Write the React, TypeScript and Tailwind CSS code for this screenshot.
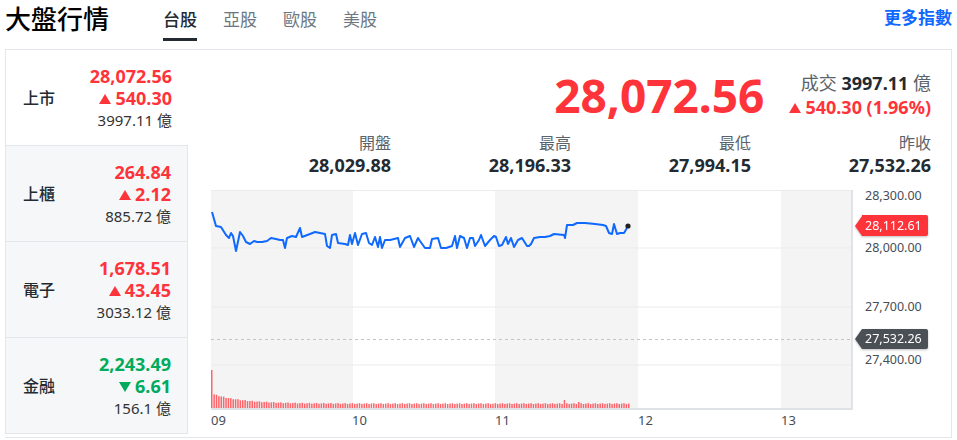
import React from "react";

const RED = "#ff333a";
const GREEN = "#00ab5e";

type Card = {
  name: string;
  value: string;
  change: string;
  up: boolean;
  volume: string;
};

const cards: Card[] = [
  { name: "上市", value: "28,072.56", change: "540.30", up: true, volume: "3997.11" },
  { name: "上櫃", value: "264.84", change: "2.12", up: true, volume: "885.72" },
  { name: "電子", value: "1,678.51", change: "43.45", up: true, volume: "3033.12" },
  { name: "金融", value: "2,243.49", change: "6.61", up: false, volume: "156.1" },
];

const stats = [
  { label: "開盤", value: "28,029.88" },
  { label: "最高", value: "28,196.33" },
  { label: "最低", value: "27,994.15" },
  { label: "昨收", value: "27,532.26" },
];

// price line, traced in page coordinates
const linePts: [number, number][] = [
  [212, 212], [216, 226], [221, 227], [226, 235], [229, 238], [231, 233], [233, 236], [236, 251],
  [240, 232], [243, 236], [246, 242], [250, 244], [254, 241], [257, 242], [262, 242], [267, 241],
  [271, 238], [276, 239], [280, 240], [283, 240], [285, 248], [287, 238], [292, 236], [296, 237],
  [300, 228], [302, 237], [310, 234], [315, 232], [320, 233], [325, 234], [327, 246], [330, 248],
  [332, 235], [336, 234], [338, 243], [345, 244], [348, 245], [350, 235], [352, 244], [355, 233],
  [358, 245], [362, 234], [366, 233], [369, 243], [372, 245], [375, 237], [378, 247], [380, 237],
  [382, 248], [385, 240], [390, 240], [398, 238], [400, 247], [405, 238], [410, 236], [414, 247],
  [418, 238], [420, 241], [425, 248], [430, 248], [432, 239], [438, 238], [441, 248], [446, 248],
  [452, 246], [455, 236], [457, 248], [460, 236], [464, 238], [467, 248], [470, 238], [473, 238],
  [475, 246], [479, 240], [481, 235], [485, 246], [490, 240], [494, 236], [496, 237], [499, 246],
  [502, 245], [506, 237], [508, 244], [511, 238], [514, 247], [518, 240], [522, 238], [527, 246],
  [529, 246], [531, 244], [534, 238], [540, 237], [545, 237], [550, 236], [554, 234], [564, 235],
  [565, 238], [567, 225], [573, 225], [577, 223], [585, 223], [595, 224], [603, 225], [606, 226],
  [609, 233], [612, 234], [614, 224], [617, 234], [620, 233], [624, 233], [627, 228],
];

const OX = 211;
const OY = 190;
const PW = 641;
const PH = 219;

const bars = Array.from({ length: 176 }, (_, i) => {
  let h = 5 + 10 * Math.exp(-i / 12) + ((i * 7) % 3) * 0.4;
  if (i === 0) h = 39;
  if (i === 148) h = 9;
  if (i === 154) h = 7;
  return { x: i * 2.383, h };
});

const Tri = ({ up, color }: { up: boolean; color: string }) => (
  <svg width="12" height="10" viewBox="0 0 12 10" className="inline-block mr-[4px] mb-[2px]">
    {up ? <polygon points="6,0 12,10 0,10" fill={color} /> : <polygon points="0,0 12,0 6,10" fill={color} />}
  </svg>
);

const Chart = () => {
  const path = linePts.map(([x, y]) => `${x - OX},${y - OY}`).join(" ");
  return (
    <div className="relative ml-[23px] h-[247px]">
      <svg width={PW + 2} height={PH + 2} className="block">
        <rect x="0" y="0" width="142" height={PH} fill="#f4f4f4" />
        <rect x="284" y="0" width="143" height={PH} fill="#f4f4f4" />
        <rect x="570" y="0" width="71" height={PH} fill="#f4f4f4" />
        {[0.5, 58, 117, 175].map((y) => (
          <line key={y} x1="0" x2={PW} y1={y} y2={y} stroke="#ebebeb" strokeWidth="1" />
        ))}
        <line x1="0" x2={PW} y1="149.5" y2="149.5" stroke="#c4c4c4" strokeDasharray="3 3" />
        {bars.map((b, i) => (
          <rect key={i} x={b.x} y={PH - b.h} width="1.5" height={b.h} fill="#ff4b52" opacity="0.85" />
        ))}
        <polyline points={path} fill="none" stroke="#0f69ff" strokeWidth="2" strokeLinejoin="round" />
        <circle cx={628 - OX} cy={226 - OY} r="2.6" fill="#222" />
        <line x1={PW} x2={PW} y1="0" y2={PH} stroke="#dfe2e6" strokeWidth="2" />
        <line x1="0" x2={PW + 1} y1={PH} y2={PH} stroke="#dfe2e6" strokeWidth="2" />
      </svg>

      {[
        { t: "28,300.00", y: 6 },
        { t: "28,000.00", y: 58 },
        { t: "27,700.00", y: 117 },
        { t: "27,400.00", y: 170 },
      ].map((l) => (
        <span
          key={l.t}
          className="absolute left-[654px] -translate-y-1/2 text-[12.5px] leading-[16px] text-[#464e56]"
          style={{ top: l.y }}
        >
          {l.t}
        </span>
      ))}

      <div className="absolute left-[644px] top-[25px] flex items-center drop-shadow-[0_1px_1px_rgba(0,0,0,0.25)]">
        <div className="w-0 h-0 border-y-[10.5px] border-y-transparent border-r-[7px] border-r-[#ff333a]" />
        <div className="h-[21px] pl-[3px] pr-[6px] bg-[#ff333a] text-white text-[12.5px] leading-[21px] rounded-r-[2px]">28,112.61</div>
      </div>
      <div className="absolute left-[644px] top-[139px] flex items-center drop-shadow-[0_1px_1px_rgba(0,0,0,0.25)]">
        <div className="w-0 h-0 border-y-[10px] border-y-transparent border-r-[7px] border-r-[#4a5056]" />
        <div className="h-[20px] pl-[3px] pr-[6px] bg-[#4a5056] text-white text-[12.5px] leading-[20px] rounded-r-[2px]">27,532.26</div>
      </div>

      {[
        { t: "09", x: 0 },
        { t: "10", x: 141 },
        { t: "11", x: 284 },
        { t: "12", x: 427 },
        { t: "13", x: 570 },
      ].map((l) => (
        <span
          key={l.t}
          className="absolute top-[222px] text-[13px] leading-[16px] text-[#464e56]"
          style={{ left: l.x }}
        >
          {l.t}
        </span>
      ))}
    </div>
  );
};

export default function App() {
  return (
    <div className="w-[957px] h-[440px] bg-white text-[#232a31] overflow-hidden font-['Noto_Sans','Noto_Sans_CJK_TC',sans-serif]">
      <header className="mx-[5px] h-[50px] flex items-start border-b border-[#e3e6ea]">
        <h1 className="text-[26px] leading-[36px] pt-[1px] font-medium text-black">大盤行情</h1>
        <nav className="ml-[54px] flex gap-[26px] h-[41px]">
          {["台股", "亞股", "歐股", "美股"].map((t, i) => (
            <div
              key={t}
              className={
                "h-full flex items-center pt-[2px] text-[17px] border-b-[3px] " +
                (i === 0 ? "border-[#232a31] text-[#232a31] font-medium" : "border-transparent text-[#6e7780]")
              }
            >
              {t}
            </div>
          ))}
        </nav>
        <a className="ml-auto mt-[6px] text-[17px] leading-[24px] font-bold text-[#0f69ff]">更多指數</a>
      </header>

      <div className="mx-[5px] flex h-[388px] border-b border-[#e3e6ea]">
        <div className="w-[183px] shrink-0 flex flex-col">
          {cards.map((c, i) => {
            const col = c.up ? RED : GREEN;
            return (
              <div
                key={c.name}
                className={
                  "h-[96px] flex items-center justify-between pl-[17px] pr-[16px] border-l border-b border-[#e3e6ea] " +
                  (i === 0 ? "bg-white" : "bg-[#f5f7f9] border-r")
                }
              >
                <span className="text-[16px] font-medium">{c.name}</span>
                <div className="flex flex-col items-end">
                  <span className="text-[18px] leading-[22px] font-bold" style={{ color: col }}>
                    {c.value}
                  </span>
                  <span className="text-[18px] leading-[22px] font-bold" style={{ color: col }}>
                    <Tri up={c.up} color={col} />
                    {c.change}
                  </span>
                  <span className="text-[15px] leading-[22px] text-[#333]">{c.volume} 億</span>
                </div>
              </div>
            );
          })}
        </div>

        <div className="flex-1 border-r border-[#e3e6ea] flex flex-col">
          <div className="h-[80px] flex items-center justify-end gap-[25px] pr-[20px] pt-[10px]">
            <span className="text-[46px] leading-[52px] font-bold" style={{ color: RED }}>
              28,072.56
            </span>
            <div className="flex flex-col items-end">
              <span className="text-[18px] leading-[24px]">
                <span className="text-[#5b636a]">成交 </span>
                <span className="font-bold">3997.11</span>
                <span className="text-[#5b636a]"> 億</span>
              </span>
              <span className="text-[18px] leading-[24px] font-bold" style={{ color: RED }}>
                <Tri up color={RED} />
                540.30 (1.96%)
              </span>
            </div>
          </div>
          <div className="h-[60px] ml-[23px] w-[720px] grid grid-cols-4">
            {stats.map((s) => (
              <div key={s.label} className="flex flex-col items-end pt-[2px]">
                <span className="text-[16px] leading-[22px] text-[#5b636a]">{s.label}</span>
                <span className="text-[18px] leading-[22px] font-bold">{s.value}</span>
              </div>
            ))}
          </div>
          <Chart />
        </div>
      </div>
    </div>
  );
}
